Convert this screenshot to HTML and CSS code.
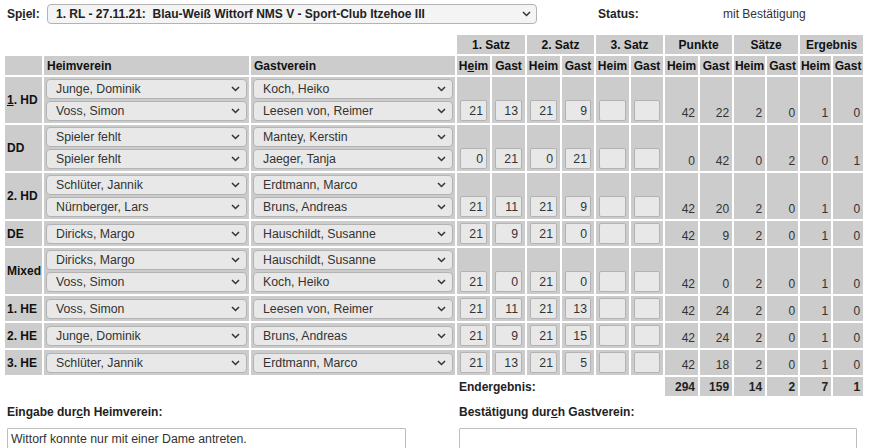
FILE: index.html
```html
<!DOCTYPE html>
<html lang="de">
<head>
<meta charset="utf-8">
<title>Spielbericht</title>
<link rel="stylesheet" href="styles.css">
</head>
<body>
<div class="page">
  <div class="topbar">
    <span class="top-label">Sp<u>i</u>el:</span>
    <span class="sel game">
      <select><option>1. RL - 27.11.21:&nbsp; Blau-Weiß Wittorf NMS V - Sport-Club Itzehoe III</option></select>
      <svg class="chev" width="9" height="6" viewBox="0 0 9 6"><path d="M1 1l3.5 3.5L8 1" fill="none" stroke="#333" stroke-width="1.5"/></svg>
    </span>
    <span class="status-label">Status:</span>
    <span class="status-value">mit Bestätigung</span>
  </div>

  <table class="grid">
    <colgroup>
      <col class="c-lbl"><col class="c-home"><col class="c-guest">
      <col class="c33"><col class="c33"><col class="c33"><col class="c32"><col class="c33"><col class="c32">
      <col class="c33"><col class="c32"><col class="c31"><col class="c31"><col class="c31"><col class="c30">
    </colgroup>
    <thead>
      <tr class="hrow">
        <td class="blank"></td><td class="blank"></td><td class="blank"></td>
        <th colspan="2">1. Satz</th><th colspan="2">2. Satz</th><th colspan="2">3. Satz</th>
        <th colspan="2">Punkte</th><th colspan="2">Sätze</th><th colspan="2">Ergebnis</th>
      </tr>
      <tr class="hrow">
        <th></th><th class="hl">Heimverein</th><th class="hl">Gastverein</th>
        <th>H<u>e</u>im</th><th>Gast</th><th>Heim</th><th>Gast</th><th>Heim</th><th>Gast</th>
        <th>Heim</th><th>Gast</th><th>Heim</th><th>Gast</th><th>Heim</th><th>Gast</th>
      </tr>
    </thead>
    <tbody>
      <tr>
        <th class="lbl"><u>1</u>. HD</th>
        <td class="pl">
          <span class="sel"><select><option>Junge, Dominik</option></select><svg class="chev" width="9" height="6" viewBox="0 0 9 6"><path d="M1 1l3.5 3.5L8 1" fill="none" stroke="#333" stroke-width="1.5"/></svg></span>
          <span class="sel"><select><option>Voss, Simon</option></select><svg class="chev" width="9" height="6" viewBox="0 0 9 6"><path d="M1 1l3.5 3.5L8 1" fill="none" stroke="#333" stroke-width="1.5"/></svg></span>
        </td>
        <td class="pl">
          <span class="sel"><select><option>Koch, Heiko</option></select><svg class="chev" width="9" height="6" viewBox="0 0 9 6"><path d="M1 1l3.5 3.5L8 1" fill="none" stroke="#333" stroke-width="1.5"/></svg></span>
          <span class="sel"><select><option>Leesen von, Reimer</option></select><svg class="chev" width="9" height="6" viewBox="0 0 9 6"><path d="M1 1l3.5 3.5L8 1" fill="none" stroke="#333" stroke-width="1.5"/></svg></span>
        </td>
        <td class="sc"><input value="21"></td><td class="sc"><input value="13"></td><td class="sc"><input value="21"></td><td class="sc"><input value="9"></td><td class="sc"><input value=""></td><td class="sc"><input value=""></td>
        <td class="res">42</td><td class="res">22</td><td class="res">2</td><td class="res">0</td><td class="res">1</td><td class="res">0</td>
      </tr>
      <tr>
        <th class="lbl">DD</th>
        <td class="pl">
          <span class="sel"><select><option>Spieler fehlt</option></select><svg class="chev" width="9" height="6" viewBox="0 0 9 6"><path d="M1 1l3.5 3.5L8 1" fill="none" stroke="#333" stroke-width="1.5"/></svg></span>
          <span class="sel"><select><option>Spieler fehlt</option></select><svg class="chev" width="9" height="6" viewBox="0 0 9 6"><path d="M1 1l3.5 3.5L8 1" fill="none" stroke="#333" stroke-width="1.5"/></svg></span>
        </td>
        <td class="pl">
          <span class="sel"><select><option>Mantey, Kerstin</option></select><svg class="chev" width="9" height="6" viewBox="0 0 9 6"><path d="M1 1l3.5 3.5L8 1" fill="none" stroke="#333" stroke-width="1.5"/></svg></span>
          <span class="sel"><select><option>Jaeger, Tanja</option></select><svg class="chev" width="9" height="6" viewBox="0 0 9 6"><path d="M1 1l3.5 3.5L8 1" fill="none" stroke="#333" stroke-width="1.5"/></svg></span>
        </td>
        <td class="sc"><input value="0"></td><td class="sc"><input value="21"></td><td class="sc"><input value="0"></td><td class="sc"><input value="21"></td><td class="sc"><input value=""></td><td class="sc"><input value=""></td>
        <td class="res">0</td><td class="res">42</td><td class="res">0</td><td class="res">2</td><td class="res">0</td><td class="res">1</td>
      </tr>
      <tr>
        <th class="lbl">2. HD</th>
        <td class="pl">
          <span class="sel"><select><option>Schlüter, Jannik</option></select><svg class="chev" width="9" height="6" viewBox="0 0 9 6"><path d="M1 1l3.5 3.5L8 1" fill="none" stroke="#333" stroke-width="1.5"/></svg></span>
          <span class="sel"><select><option>Nürnberger, Lars</option></select><svg class="chev" width="9" height="6" viewBox="0 0 9 6"><path d="M1 1l3.5 3.5L8 1" fill="none" stroke="#333" stroke-width="1.5"/></svg></span>
        </td>
        <td class="pl">
          <span class="sel"><select><option>Erdtmann, Marco</option></select><svg class="chev" width="9" height="6" viewBox="0 0 9 6"><path d="M1 1l3.5 3.5L8 1" fill="none" stroke="#333" stroke-width="1.5"/></svg></span>
          <span class="sel"><select><option>Bruns, Andreas</option></select><svg class="chev" width="9" height="6" viewBox="0 0 9 6"><path d="M1 1l3.5 3.5L8 1" fill="none" stroke="#333" stroke-width="1.5"/></svg></span>
        </td>
        <td class="sc"><input value="21"></td><td class="sc"><input value="11"></td><td class="sc"><input value="21"></td><td class="sc"><input value="9"></td><td class="sc"><input value=""></td><td class="sc"><input value=""></td>
        <td class="res">42</td><td class="res">20</td><td class="res">2</td><td class="res">0</td><td class="res">1</td><td class="res">0</td>
      </tr>
      <tr>
        <th class="lbl">DE</th>
        <td class="pl">
          <span class="sel"><select><option>Diricks, Margo</option></select><svg class="chev" width="9" height="6" viewBox="0 0 9 6"><path d="M1 1l3.5 3.5L8 1" fill="none" stroke="#333" stroke-width="1.5"/></svg></span>
        </td>
        <td class="pl">
          <span class="sel"><select><option>Hauschildt, Susanne</option></select><svg class="chev" width="9" height="6" viewBox="0 0 9 6"><path d="M1 1l3.5 3.5L8 1" fill="none" stroke="#333" stroke-width="1.5"/></svg></span>
        </td>
        <td class="sc"><input value="21"></td><td class="sc"><input value="9"></td><td class="sc"><input value="21"></td><td class="sc"><input value="0"></td><td class="sc"><input value=""></td><td class="sc"><input value=""></td>
        <td class="res">42</td><td class="res">9</td><td class="res">2</td><td class="res">0</td><td class="res">1</td><td class="res">0</td>
      </tr>
      <tr>
        <th class="lbl">Mixed</th>
        <td class="pl">
          <span class="sel"><select><option>Diricks, Margo</option></select><svg class="chev" width="9" height="6" viewBox="0 0 9 6"><path d="M1 1l3.5 3.5L8 1" fill="none" stroke="#333" stroke-width="1.5"/></svg></span>
          <span class="sel"><select><option>Voss, Simon</option></select><svg class="chev" width="9" height="6" viewBox="0 0 9 6"><path d="M1 1l3.5 3.5L8 1" fill="none" stroke="#333" stroke-width="1.5"/></svg></span>
        </td>
        <td class="pl">
          <span class="sel"><select><option>Hauschildt, Susanne</option></select><svg class="chev" width="9" height="6" viewBox="0 0 9 6"><path d="M1 1l3.5 3.5L8 1" fill="none" stroke="#333" stroke-width="1.5"/></svg></span>
          <span class="sel"><select><option>Koch, Heiko</option></select><svg class="chev" width="9" height="6" viewBox="0 0 9 6"><path d="M1 1l3.5 3.5L8 1" fill="none" stroke="#333" stroke-width="1.5"/></svg></span>
        </td>
        <td class="sc"><input value="21"></td><td class="sc"><input value="0"></td><td class="sc"><input value="21"></td><td class="sc"><input value="0"></td><td class="sc"><input value=""></td><td class="sc"><input value=""></td>
        <td class="res">42</td><td class="res">0</td><td class="res">2</td><td class="res">0</td><td class="res">1</td><td class="res">0</td>
      </tr>
      <tr>
        <th class="lbl">1. HE</th>
        <td class="pl">
          <span class="sel"><select><option>Voss, Simon</option></select><svg class="chev" width="9" height="6" viewBox="0 0 9 6"><path d="M1 1l3.5 3.5L8 1" fill="none" stroke="#333" stroke-width="1.5"/></svg></span>
        </td>
        <td class="pl">
          <span class="sel"><select><option>Leesen von, Reimer</option></select><svg class="chev" width="9" height="6" viewBox="0 0 9 6"><path d="M1 1l3.5 3.5L8 1" fill="none" stroke="#333" stroke-width="1.5"/></svg></span>
        </td>
        <td class="sc"><input value="21"></td><td class="sc"><input value="11"></td><td class="sc"><input value="21"></td><td class="sc"><input value="13"></td><td class="sc"><input value=""></td><td class="sc"><input value=""></td>
        <td class="res">42</td><td class="res">24</td><td class="res">2</td><td class="res">0</td><td class="res">1</td><td class="res">0</td>
      </tr>
      <tr>
        <th class="lbl">2. HE</th>
        <td class="pl">
          <span class="sel"><select><option>Junge, Dominik</option></select><svg class="chev" width="9" height="6" viewBox="0 0 9 6"><path d="M1 1l3.5 3.5L8 1" fill="none" stroke="#333" stroke-width="1.5"/></svg></span>
        </td>
        <td class="pl">
          <span class="sel"><select><option>Bruns, Andreas</option></select><svg class="chev" width="9" height="6" viewBox="0 0 9 6"><path d="M1 1l3.5 3.5L8 1" fill="none" stroke="#333" stroke-width="1.5"/></svg></span>
        </td>
        <td class="sc"><input value="21"></td><td class="sc"><input value="9"></td><td class="sc"><input value="21"></td><td class="sc"><input value="15"></td><td class="sc"><input value=""></td><td class="sc"><input value=""></td>
        <td class="res">42</td><td class="res">24</td><td class="res">2</td><td class="res">0</td><td class="res">1</td><td class="res">0</td>
      </tr>
      <tr>
        <th class="lbl">3. HE</th>
        <td class="pl">
          <span class="sel"><select><option>Schlüter, Jannik</option></select><svg class="chev" width="9" height="6" viewBox="0 0 9 6"><path d="M1 1l3.5 3.5L8 1" fill="none" stroke="#333" stroke-width="1.5"/></svg></span>
        </td>
        <td class="pl">
          <span class="sel"><select><option>Erdtmann, Marco</option></select><svg class="chev" width="9" height="6" viewBox="0 0 9 6"><path d="M1 1l3.5 3.5L8 1" fill="none" stroke="#333" stroke-width="1.5"/></svg></span>
        </td>
        <td class="sc"><input value="21"></td><td class="sc"><input value="13"></td><td class="sc"><input value="21"></td><td class="sc"><input value="5"></td><td class="sc"><input value=""></td><td class="sc"><input value=""></td>
        <td class="res">42</td><td class="res">18</td><td class="res">2</td><td class="res">0</td><td class="res">1</td><td class="res">0</td>
      </tr>
      <tr class="totals">
        <td class="blank" colspan="3"></td>
        <td class="blank endlabel" colspan="6">Endergebnis:</td>
        <td class="tot">294</td><td class="tot">159</td><td class="tot">14</td><td class="tot">2</td><td class="tot">7</td><td class="tot">1</td>
      </tr>
    </tbody>
  </table>

  <div class="notes">
    <div class="note note-home">
      <div class="note-label">Eingabe dur<u>c</u>h Heimverein:</div>
      <textarea class="note-text">Wittorf konnte nur mit einer Dame antreten.</textarea>
    </div>
    <div class="note note-guest">
      <div class="note-label">Bestätigung dur<u>c</u>h Gastverein:</div>
      <textarea class="note-text"></textarea>
    </div>
  </div>
</div>
</body>
</html>
```

FILE: styles.css
```css
* { box-sizing: border-box; }

body {
  margin: 0;
  background: #fff;
  color: #000;
  font-family: "Liberation Sans", Arial, sans-serif;
  font-size: 12px;
}

.page {
  padding: 3px 0 0 3px;
}

/* top bar */
.topbar {
  display: flex;
  align-items: center;
  height: 22px;
  padding-left: 4px;
}
.top-label {
  width: 40px;
  font-weight: bold;
  color: #222;
}
.status-label {
  margin-left: 61px;
  width: 125px;
  font-weight: bold;
  color: #222;
}
.status-value {
  color: #333;
}

/* select look */
.sel {
  position: relative;
  display: block;
}
.sel select {
  -webkit-appearance: none;
  appearance: none;
  display: block;
  width: 100%;
  height: 20px;
  margin: 0;
  padding: 0 20px 0 9px;
  border: 1px solid #b3b3b3;
  border-radius: 4px;
  background: #e8e8e8;
  color: #333;
  font-family: "Liberation Sans", Arial, sans-serif;
  font-size: 12.3px;
}
.sel .chev {
  position: absolute;
  right: 7px;
  top: 7px;
  pointer-events: none;
}
.game {
  width: 490px;
}
.game select {
  background: #f4f4f4;
  font-weight: bold;
  font-size: 12px;
  color: #222;
  padding-left: 8px;
}
.game .chev {
  right: 6px;
}

/* grid table */
.grid {
  margin-top: 8px;
  border-collapse: separate;
  border-spacing: 2px;
  table-layout: fixed;
  width: 862px;
}
.c-lbl { width: 37px; }
.c-home { width: 205px; }
.c-guest { width: 204px; }
.c33 { width: 33px; }
.c32 { width: 32px; }
.c31 { width: 31px; }
.c30 { width: 30px; }

.grid th,
.grid td {
  padding: 0;
  background: #cccccc;
  font-size: 12px;
}
.grid .blank {
  background: transparent;
}
.grid .hrow {
  height: 19px;
}
.grid .hrow th {
  font-weight: bold;
  text-align: center;
  color: #111;
}
.grid .hrow th.hl {
  text-align: left;
  padding-left: 3px;
}

.grid .lbl {
  text-align: left;
  padding-left: 2px;
  font-weight: bold;
  vertical-align: middle;
  color: #111;
}
.grid .pl {
  padding: 2px;
  vertical-align: middle;
}
.pl .sel + .sel {
  margin-top: 2px;
}
.grid .sc {
  padding: 2px 3px;
  vertical-align: bottom;
}
.sc input {
  display: block;
  width: 100%;
  height: 21px;
  margin: 0;
  padding: 0 3px;
  border: 1px solid #b3b3b3;
  border-radius: 2px;
  background: #e8e8e8;
  color: #333;
  text-align: right;
  font-family: "Liberation Sans", Arial, sans-serif;
  font-size: 12.3px;
}
.grid .res {
  text-align: right;
  vertical-align: bottom;
  padding: 0 3px 2px 0;
  line-height: 15px;
  color: #333;
}

.grid .totals {
  height: 19px;
}
.grid .endlabel {
  font-weight: bold;
  padding-left: 2px;
  text-align: left;
  color: #222;
}
.grid .tot {
  font-weight: bold;
  text-align: right;
  padding-right: 3px;
  color: #222;
}

/* notes */
.notes {
  display: flex;
  margin-top: 7px;
  padding-left: 4px;
}
.note-home {
  width: 452px;
}
.note-label {
  font-weight: bold;
  line-height: 14px;
  color: #222;
}
.note-text {
  display: block;
  margin-top: 9px;
  height: 40px;
  padding: 3px;
  border: 1px solid #bdbdbd;
  border-radius: 1px;
  background: #fff;
  color: #333;
  font-family: "Liberation Sans", Arial, sans-serif;
  font-size: 12.3px;
  line-height: 15px;
  resize: none;
}
.note-home .note-text { width: 399px; }
.note-guest .note-text { width: 398px; }
```
